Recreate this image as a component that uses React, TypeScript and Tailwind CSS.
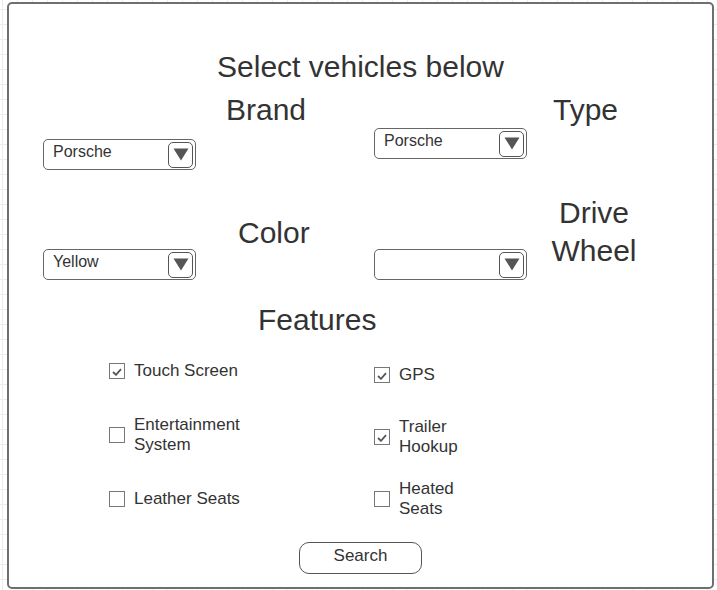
import React from 'react';

interface SelectBoxProps {
  value?: string;
}

const SelectBox = ({ value }: SelectBoxProps) => {
  return (
    <div className="flex items-center justify-between w-[153px] h-[31px] rounded-[5px] border-[1.5px] border-[#666] bg-white pl-[9px] pr-[2px]">
      <span className="mb-[5px] text-[16px] leading-[20px] text-[#333]">{value}</span>
      <div className="flex items-center justify-center w-[25px] h-[26px] rounded-[5px] border-[1.5px] border-[#555]">
        <svg width="16" height="13" viewBox="0 0 16 13">
          <path d="M0.5 0.5 H15.5 L8 12.5 Z" fill="#555" />
        </svg>
      </div>
    </div>
  );
};

interface CheckItemProps {
  checked?: boolean;
  children: React.ReactNode;
}

const CheckItem = ({ checked, children }: CheckItemProps) => {
  return (
    <div className="flex items-center h-[40px] gap-[9px]">
      <div className="flex items-center justify-center w-[16px] h-[16px] border-[1.5px] border-[#777] bg-white">
        {checked && (
          <svg width="10" height="8" viewBox="0 0 10 8" className="mt-[1px]">
            <path d="M1 4 L4 6.8 L9 1.2" stroke="#555" strokeWidth="1.8" fill="none" />
          </svg>
        )}
      </div>
      <span className="text-[17px] leading-[20px] text-[#333]">{children}</span>
    </div>
  );
};

const App = () => {
  return (
    <div
      className="w-[717px] h-[590px] pl-[7px] pt-[2px] bg-white bg-[linear-gradient(to_right,#ececec_1px,transparent_1px),linear-gradient(to_bottom,#ececec_1px,transparent_1px)] bg-[size:15px_15px] bg-[position:2px_9px] text-[#333]"
      style={{ fontFamily: '"Liberation Sans", Arial, sans-serif' }}>
      <div className="flex flex-col w-[707px] h-[587px] rounded-[5px] border-2 border-[#6f6f6f] bg-white">
        <h1 className="mt-[45px] text-center text-[30px] leading-[36px]">Select vehicles below</h1>

        {/* brand / type */}
        <div className="flex pl-[34px]">
          <div className="flex flex-col w-[331px]">
            <p className="mt-[10px] pl-[183px] text-[30px] leading-[30px]">Brand</p>
            <div className="mt-[14px]">
              <SelectBox value="Porsche" />
            </div>
          </div>
          <div className="flex flex-col">
            <p className="mt-[10px] pl-[179px] text-[30px] leading-[30px]">Type</p>
            <div className="mt-[3px]">
              <SelectBox value="Porsche" />
            </div>
          </div>
        </div>

        {/* color / drive wheel */}
        <div className="flex pl-[34px]">
          <div className="flex flex-col w-[331px]">
            <p className="mt-[48px] pl-[195px] text-[30px] leading-[30px]">Color</p>
            <div className="mt-[1px]">
              <SelectBox value="Yellow" />
            </div>
          </div>
          <div className="flex items-start">
            <div className="mt-[79px]">
              <SelectBox />
            </div>
            <p className="mt-[24px] w-[134px] text-center text-[30px] leading-[38px]">
              Drive
              <br />
              Wheel
            </p>
          </div>
        </div>

        <p className="mt-[25px] ml-[249px] text-[30px] leading-[30px]">Features</p>

        <div className="flex pl-[100px]">
          <div className="flex flex-col w-[265px] mt-[16px] gap-[24px]">
            <CheckItem checked>Touch Screen</CheckItem>
            <CheckItem>
              Entertainment
              <br />
              System
            </CheckItem>
            <CheckItem>Leather Seats</CheckItem>
          </div>
          <div className="flex flex-col mt-[20px] gap-[22px]">
            <CheckItem checked>GPS</CheckItem>
            <CheckItem checked>
              Trailer
              <br />
              Hookup
            </CheckItem>
            <CheckItem>
              Heated
              <br />
              Seats
            </CheckItem>
          </div>
        </div>

        <button className="flex items-center justify-center mx-auto mt-[23px] w-[123px] h-[32px] pb-[4px] rounded-[10px] border-[1.5px] border-[#555] bg-white text-[17px] leading-[20px] text-[#333]">
          Search
        </button>
      </div>
    </div>
  );
};

export default App;
